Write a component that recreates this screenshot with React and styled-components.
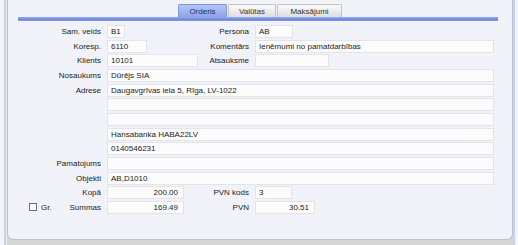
import React from "react";
import styled, { createGlobalStyle } from "styled-components";

const Global = createGlobalStyle`
  html, body { margin: 0; padding: 0; background: #d9d9d9; }
  * { box-sizing: border-box; }
`;

const Window = styled.div`
  width: 518px;
  height: 245px;
  overflow: hidden;
  background:
    linear-gradient(to right, #f3f4f8 0 4px, #c9d1e2 4px 6px, #e9ecf4 6px 7px, transparent 7px),
    linear-gradient(to left, #f3f4f8 0 3px, #c7d2e8 3px 5px, transparent 5px),
    #d7d7d7;
  padding-left: 7px;
`;

const Panel = styled.div`
  width: 506px;
  height: 240px;
  border: 1px solid #b7c3dc;
  border-top: none;
  border-radius: 0 0 6px 6px;
  background: repeating-linear-gradient(to bottom, #eef1f8 0 1px, #f2f4fa 1px 2px);
  font-family: "Liberation Sans", Arial, sans-serif;
  font-size: 8px;
  color: #222;
`;

const TabRow = styled.div`
  display: flex;
  padding: 4px 0 0 170px;
  height: 17px;
`;

const Tab = styled.div`
  height: 13px;
  width: ${p => p.w}px;
  margin-right: 1px;
  display: flex;
  align-items: center;
  justify-content: center;
  border: 1px solid ${p => (p.active ? "#7f95dc" : "#c3c3c3")};
  border-bottom: none;
  border-radius: 2px 2px 0 0;
  background: ${p =>
    p.active
      ? "linear-gradient(to bottom, #b7c6f4, #8ea4ea)"
      : "linear-gradient(to bottom, #fafafa, #dedede)"};
  color: ${p => (p.active ? "#1c2c6e" : "#333")};
`;

const Bar = styled.div`
  height: 4px;
  margin: 0 14px 0 10px;
  background: linear-gradient(to bottom, #9badee, #6e87dc 60%, #8199e2);
`;

const Form = styled.div`
  display: grid;
  grid-template-columns: 93px 91px 45px 239px;
  column-gap: 6px;
  grid-auto-rows: 13px;
  row-gap: 1.67px;
  margin-top: 4px;
`;

const Label = styled.div`
  grid-column: ${p => p.col || 1};
  display: flex;
  align-items: center;
  justify-content: flex-end;
  white-space: nowrap;
`;

const Field = styled.div`
  grid-column: ${p => p.span || "auto"};
  width: ${p => (p.w ? `${p.w}px` : "auto")};
  height: 13px;
  background: #fcfcfd;
  border: 1px solid #e3e4ea;
  display: flex;
  align-items: center;
  justify-content: ${p => (p.num ? "flex-end" : "flex-start")};
  padding: 0 ${p => (p.num ? "5px" : "3px")};
  white-space: nowrap;
`;

const Empty = styled.div`
  grid-column: ${p => p.span || "auto"};
`;

const CheckCell = styled.div`
  grid-column: 1;
  display: flex;
  align-items: center;
  padding-left: 21px;
`;

const Box = styled.span`
  width: 8px;
  height: 8px;
  border: 1px solid #6e6e6e;
  background: #fff;
  margin-right: 4px;
`;

const Grow = styled.span`
  flex: 1;
`;

export default function App() {
  return (
    <Window>
      <Global />
      <Panel>
        <TabRow>
          <Tab active w={49}>Orderis</Tab>
          <Tab w={48}>Valūtas</Tab>
          <Tab w={65}>Maksājumi</Tab>
        </TabRow>
        <Bar />
        <Form>
          <Label>Sam. veids</Label>
          <Field w={18}>B1</Field>
          <Label col={3}>Persona</Label>
          <Field w={38}>AB</Field>

          <Label>Koresp.</Label>
          <Field w={40}>6110</Field>
          <Label col={3}>Komentārs</Label>
          <Field>Ieņēmumi no pamatdarbības</Field>

          <Label>Klients</Label>
          <Field>10101</Field>
          <Label col={3}>Atsauksme</Label>
          <Field w={74}></Field>

          <Label>Nosaukums</Label>
          <Field span="2 / 5">Dūrējs SIA</Field>

          <Label>Adrese</Label>
          <Field span="2 / 5">Daugavgrīvas iela 5, Rīga, LV-1022</Field>

          <Empty />
          <Field span="2 / 5"></Field>

          <Empty />
          <Field span="2 / 5"></Field>

          <Empty />
          <Field span="2 / 5">Hansabanka HABA22LV</Field>

          <Empty />
          <Field span="2 / 5">0140546231</Field>

          <Label>Pamatojums</Label>
          <Field span="2 / 5"></Field>

          <Label>Objekti</Label>
          <Field span="2 / 5">AB,D1010</Field>

          <Label>Kopā</Label>
          <Field w={77} num>200.00</Field>
          <Label col={3}>PVN kods</Label>
          <Field w={37}>3</Field>

          <CheckCell>
            <Box />
            <span>Gr.</span>
            <Grow />
            <span>Summas</span>
          </CheckCell>
          <Field w={77} num>169.49</Field>
          <Label col={3}>PVN</Label>
          <Field w={60} num>30.51</Field>
        </Form>
      </Panel>
    </Window>
  );
}
